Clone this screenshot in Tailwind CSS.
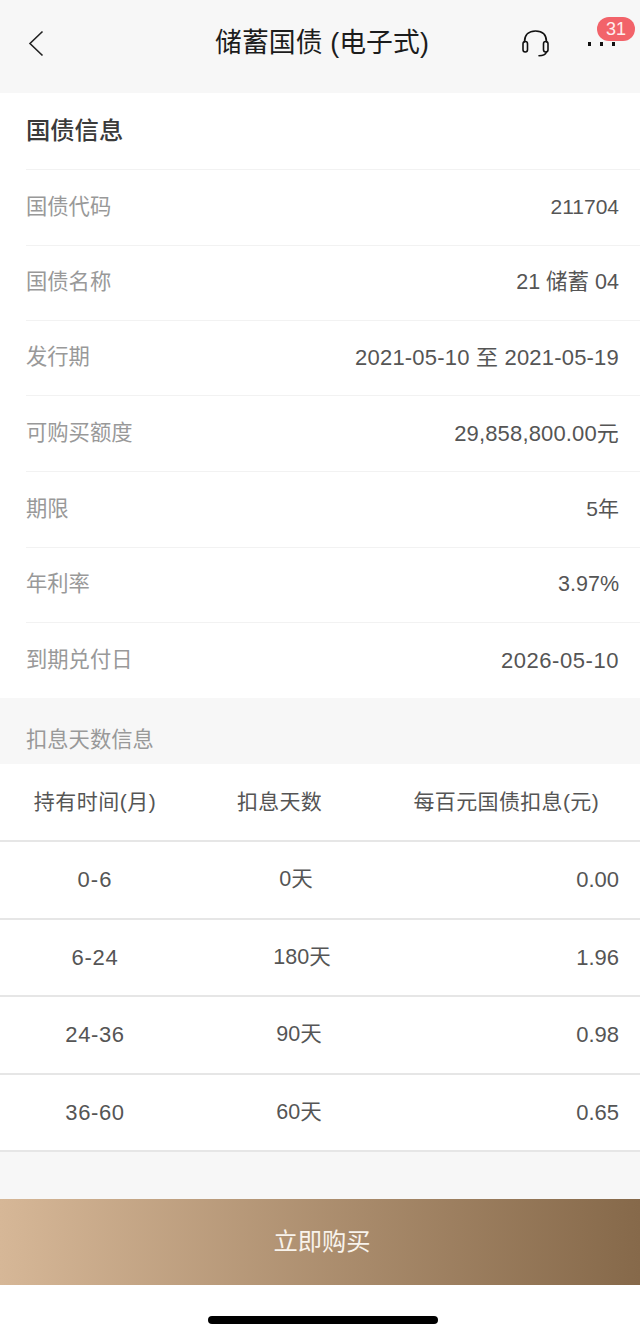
<!DOCTYPE html>
<html lang="zh-CN">
<head>
  <meta charset="UTF-8">
  <meta name="viewport" content="width=device-width, initial-scale=1.0">
  <title>储蓄国债 (电子式)</title>
  <script src="https://cdn.jsdelivr.net/npm/@tailwindcss/browser@4"></script>
</head>
<body class="bg-white font-['Liberation_Sans','Noto_Sans_CJK_SC',sans-serif]">
  <div class="w-[640px] h-[1326px] overflow-hidden flex flex-col">

    <!-- header -->
    <header class="relative h-[93px] bg-[#f7f7f7] flex items-center justify-center pb-[6px] pl-[4px]">
      <svg class="absolute left-[28px] top-[30px]" width="16" height="27" viewBox="0 0 16 27" fill="none" stroke="#222" stroke-width="1.6"><path d="M14.500 1.500 2 13.500l12.500 12"/></svg>
      <h1 class="text-[26.8px] text-[#1c1c1c] leading-none tracking-[0.1px]">储蓄国债 (电子式)</h1>
      <svg class="absolute left-[521px] top-[29px]" width="30" height="28" viewBox="0 0 30 28" fill="none" stroke="#111" stroke-width="1.600" stroke-linecap="round"><path d="M3.500 13C3.500 5.500 8 2 14.500 2s11 3.500 11 11"/><rect x="2" y="12.500" width="4.500" height="10.500" rx="2.200"/><rect x="22.500" y="12.500" width="4.500" height="10.500" rx="2.200"/><path d="M25.500 23c-1 2.500-4 3.800-7.500 3.800"/></svg>
      <div class="absolute left-[588px] top-[42px] flex gap-[9px]">
        <span class="w-[3px] h-[4px] bg-[#111]"></span>
        <span class="w-[3px] h-[4px] bg-[#111]"></span>
        <span class="w-[3px] h-[4px] bg-[#111]"></span>
      </div>
      <span class="absolute left-[597px] top-[17px] w-[38px] h-[24px] rounded-full bg-[#f2636a] text-white/90 text-[18px] leading-[24px] text-center">31</span>
    </header>

    <!-- bond info -->
    <section class="pl-[26px]">
      <h2 class="h-[77px] flex items-center text-[24.300px] font-medium text-[#3a3a3a] border-b border-[#f2f2f2]">国债信息</h2>
      <div class="h-[76px] flex items-center justify-between pr-[21px] border-b border-[#f2f2f2] text-[21.300px]"><span class="text-[#999]">国债代码</span><span class="text-[#555] text-[21px] -mt-[2px]">211704</span></div>
      <div class="h-[75px] flex items-center justify-between pr-[21px] border-b border-[#f2f2f2] text-[21.300px]"><span class="text-[#999]">国债名称</span><span class="text-[#555] text-[21.500px] -mt-[1px]">21 储蓄 04</span></div>
      <div class="h-[75px] flex items-center justify-between pr-[21px] border-b border-[#f2f2f2] text-[21.300px]"><span class="text-[#999]">发行期</span><span class="text-[#555] text-[22px] tracking-[0.2px] -mt-[1px]">2021-05-10 至 2021-05-19</span></div>
      <div class="h-[76px] flex items-center justify-between pr-[21px] border-b border-[#f2f2f2] text-[21.300px]"><span class="text-[#999]">可购买额度</span><span class="text-[#555] text-[22px] tracking-[0.15px] -mt-[1px]">29,858,800.00元</span></div>
      <div class="h-[76px] flex items-center justify-between pr-[21px] border-b border-[#f2f2f2] text-[21.300px]"><span class="text-[#999]">期限</span><span class="text-[#555] text-[21px] -mt-[1px]">5年</span></div>
      <div class="h-[75px] flex items-center justify-between pr-[21px] border-b border-[#f2f2f2] text-[21.300px]"><span class="text-[#999]">年利率</span><span class="text-[#555] text-[21.500px] -mt-[1px]">3.97%</span></div>
      <div class="h-[75px] flex items-center justify-between pr-[21px] text-[21.300px]"><span class="text-[#999]">到期兑付日</span><span class="text-[#555] text-[22px] tracking-[0.55px] -mt-[1px]">2026-05-10</span></div>
    </section>

    <!-- interest deduction table -->
    <div class="h-[66px] bg-[#f7f7f7] pl-[26px] pt-[28px] text-[21.300px] leading-[28px] text-[#999]">扣息天数信息</div>
    <section class="text-[21px] text-[#555]">
      <div class="h-[78px] grid grid-cols-[190px_220px_230px] items-center border-b-2 border-[#e6e6e6]">
        <span class="text-center tracking-[0.5px]">持有时间(月)</span>
        <span class="text-center pr-[41px] tracking-[0.2px]">扣息天数</span>
        <span class="text-right pr-[41px] tracking-[0.35px]">每百元国债扣息(元)</span>
      </div>
      <div class="h-[78px] grid grid-cols-[190px_220px_230px] items-center border-b-2 border-[#e6e6e6] text-[22px]">
        <span class="text-center tracking-[1px] -mt-[1px]">0-6</span><span class="text-center pr-[8px] text-[21.500px] -mt-[1px]">0天</span><span class="text-right pr-[21px] -mt-[1px]">0.00</span>
      </div>
      <div class="h-[77px] grid grid-cols-[190px_220px_230px] items-center border-b-2 border-[#e6e6e6] text-[22px]">
        <span class="text-center tracking-[0.8px] -mt-[1px]">6-24</span><span class="text-center pl-[4px] text-[21.500px] -mt-[1px]">180天</span><span class="text-right pr-[21px] -mt-[1px]">1.96</span>
      </div>
      <div class="h-[78px] grid grid-cols-[190px_220px_230px] items-center border-b-2 border-[#e6e6e6] text-[22px]">
        <span class="text-center tracking-[0.6px] -mt-[1px]">24-36</span><span class="text-center pr-[2px] text-[21.500px] -mt-[1px]">90天</span><span class="text-right pr-[21px] -mt-[1px]">0.98</span>
      </div>
      <div class="h-[77px] grid grid-cols-[190px_220px_230px] items-center border-b-2 border-[#e6e6e6] text-[22px]">
        <span class="text-center tracking-[0.6px] -mt-[1px]">36-60</span><span class="text-center pr-[2px] text-[21.500px] -mt-[1px]">60天</span><span class="text-right pr-[21px] -mt-[1px]">0.65</span>
      </div>
    </section>
    <div class="h-[47px] bg-[#f7f7f7]"></div>

    <!-- buy button -->
    <button class="h-[86px] w-full shrink-0 bg-gradient-to-r from-[#d6b797] to-[#86694a] text-[#f8f3ec] text-[24.300px] pl-[4px]">立即购买</button>

    <div class="flex-1 flex justify-center pt-[31px] pl-[6px]">
      <div class="w-[230px] h-[8px] rounded-full bg-black"></div>
    </div>
  </div>
</body>
</html>
